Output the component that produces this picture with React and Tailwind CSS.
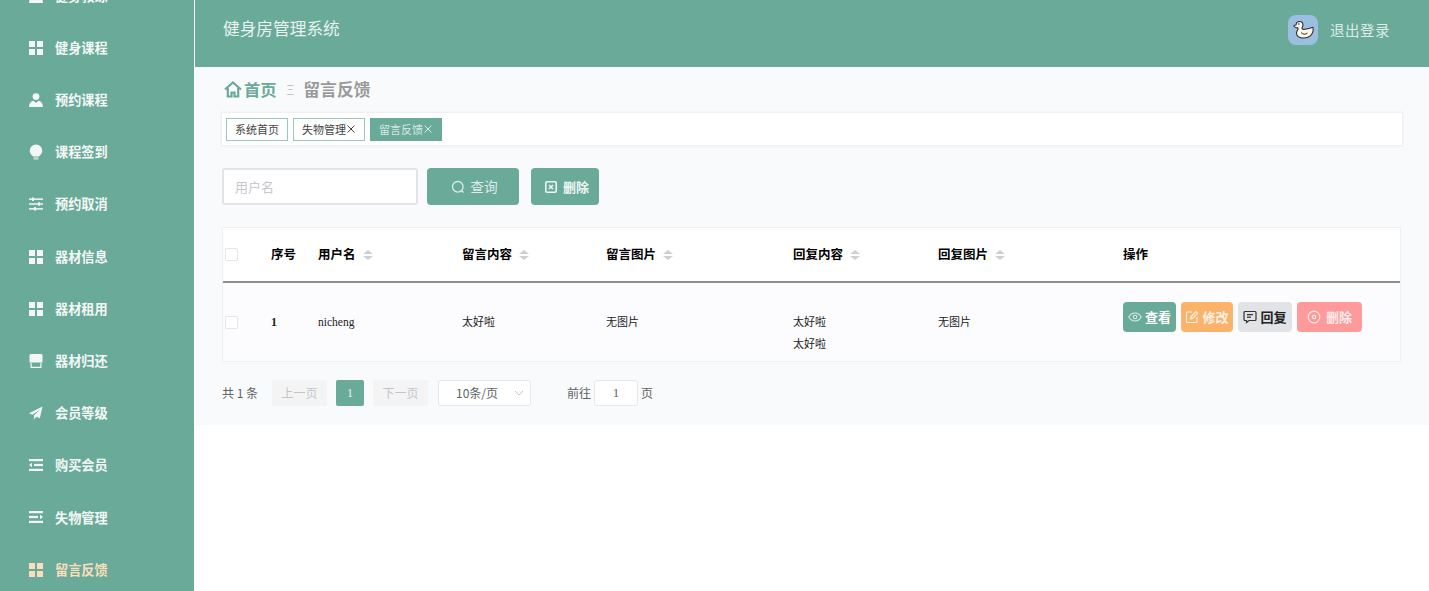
import React from "react";

const SANS = "font-['Noto_Sans_CJK_SC','Liberation_Serif',serif]";

const Grid = () => (
  <svg width="14" height="14" viewBox="0 0 14 14" fill="currentColor">
    <rect x="0" y="0" width="6" height="6" />
    <rect x="8" y="0" width="6" height="6" />
    <rect x="0" y="8" width="6" height="6" />
    <rect x="8" y="8" width="6" height="6" />
  </svg>
);
const Person = () => (
  <svg width="14" height="14" viewBox="0 0 14 14" fill="currentColor">
    <circle cx="7" cy="3.6" r="3.4" />
    <path d="M0 14c0-4 2.5-6 4.6-6.300L7 10l2.400-2.300C11.500 8 14 10 14 14z" />
  </svg>
);
const Bulb = () => (
  <svg width="14" height="16" viewBox="0 0 14 16" fill="currentColor">
    <path d="M7 .5a6.300 6.300 0 0 0-6.300 6.300c0 2.700 1.800 4.300 3.400 5.700h5.800c1.600-1.400 3.400-3 3.400-5.700A6.300 6.300 0 0 0 7 .5z" />
    <rect x="4.600" y="13.200" width="4.800" height="2.400" opacity=".65" />
  </svg>
);
const Sliders = () => (
  <svg width="14" height="14" viewBox="0 0 14 14" fill="currentColor">
    <rect x="0" y="1.400" width="14" height="1.500" />
    <rect x="0" y="6.250" width="14" height="1.500" />
    <rect x="0" y="11.100" width="14" height="1.500" />
    <rect x="3" y="0.500" width="2" height="3.400" />
    <rect x="9" y="5.300" width="2" height="3.400" />
    <rect x="5" y="10.100" width="2" height="3.400" />
  </svg>
);
const Shop = () => (
  <svg width="14" height="14" viewBox="0 0 14 14" fill="currentColor">
    <path d="M2 0h10a1.500 1.500 0 0 1 1.500 1.500V8.500H.5V1.500A1.500 1.500 0 0 1 2 0z" />
    <path d="M1.500 9h1.200v3.700h8.600V9h1.200v5H1.500z" />
  </svg>
);
const Plane = () => (
  <svg width="15" height="14" viewBox="0 0 15 14" fill="currentColor">
    <path d="M14.500 0 0 7.200l3.800 1.700L12 3 5.300 9.600V14l2.600-3 3.700 1.700z" />
  </svg>
);
const Lines = ({ left }) => (
  <svg width="14" height="12" viewBox="0 0 14 12" fill="currentColor">
    <rect x="0" y="0" width="14" height="2.200" />
    <rect x="0" y="9.800" width="14" height="2.200" />
    {left ? <rect x="5" y="4.900" width="9" height="2.200" /> : <rect x="0" y="4.900" width="9" height="2.200" />}
    {left ? <path d="M0 6l3-2.200v4.400z" /> : <path d="M14 6l-3-2.200v4.400z" />}
  </svg>
);

const Home = () => (
  <svg width="18" height="17" viewBox="0 0 18 17" fill="none" stroke="#6aaa99" strokeWidth="2.200">
    <path d="M1 8.500 9 1.500 17 8.500" />
    <path d="M3.800 7v8.500h3.700v-4h3v4h3.700V7" />
  </svg>
);

const Duck = () => (
  <svg width="24" height="20" viewBox="0 0 24 20">
    <path
      d="M3 5.500 5 5c.2-2.300 1.800-3.500 3.500-3.500 2 0 3.500 1.500 3.500 3.500 0 1.500-1 2.300-1 3.300 0 1 1.200 1.300 3 1 2.500-.4 5-1 8-2 .6 3-.6 6.500-2.700 8.500-1.600 1.500-4 2.200-6.800 2.200-3.500 0-6.500-1.500-7-4.500-.3-1.800 1-3.300 1.500-4.500.2-.5.100-1-.4-1.400-1 .3-2.500.1-3.600-1.100z"
      fill="#fbf6e6"
      stroke="#2f2f2f"
      strokeWidth="1.100"
      strokeLinejoin="round"
    />
    <circle cx="7.800" cy="4" r=".8" fill="#2f2f2f" />
    <path d="M10 12.500c1.500 2 4.500 2.200 6.500.7" fill="none" stroke="#2f2f2f" strokeWidth="1" />
  </svg>
);

const Sort = () => (
  <span className="ml-[7px] inline-flex flex-col gap-[2px]">
    <span className="h-0 w-0 border-x-[5px] border-b-[4px] border-x-transparent border-b-[#ccd0d6]" />
    <span className="h-0 w-0 border-x-[5px] border-t-[4px] border-x-transparent border-t-[#ccd0d6]" />
  </span>
);

const menu = [
  ["健身教练", <Person key="p" />],
  ["健身课程", <Grid key="g" />],
  ["预约课程", <Person key="p" />],
  ["课程签到", <Bulb key="b" />],
  ["预约取消", <Sliders key="s" />],
  ["器材信息", <Grid key="g" />],
  ["器材租用", <Grid key="g" />],
  ["器材归还", <Shop key="s" />],
  ["会员等级", <Plane key="pl" />],
  ["购买会员", <Lines key="l" left />],
  ["失物管理", <Lines key="l" />],
  ["留言反馈", <Grid key="g" />],
];

const Tag = ({ children, active, close }) => (
  <span
    className={`flex h-[23px] items-center border pl-[8px] text-[11px] ${close ? "w-[72px] pr-[8px]" : "pr-[8px]"} ${
      active ? "border-[#6aaa99] bg-[#6aaa99] text-[#d7e9e4]" : "border-[#9cc7bb] bg-white text-[#444]"
    }`}
  >
    {children}
    {close && (
      <svg className="ml-auto shrink-0" width="10" height="10" viewBox="0 0 10 10" stroke="currentColor" strokeWidth="1">
        <path d="M1.500 1.500l7 7M8.500 1.500l-7 7" />
      </svg>
    )}
  </span>
);

const cols = "grid grid-cols-[48px_47px_144px_144px_187px_145px_185px_1fr]";

const Th = ({ children, sort }) => (
  <div className="flex items-center text-[12.500px] font-bold text-black">
    {children}
    {sort && <Sort />}
  </div>
);

const ActBtn = ({ bg, text, w, icon, children }) => (
  <span
    className={`flex h-[30px] items-center justify-center gap-[3px] rounded-[4px] text-[13px] font-bold ${bg} ${text} ${w}`}
  >
    {icon}
    {children}
  </span>
);

const PageBtn = ({ children, cls }) => (
  <span className={`flex h-[26px] items-center justify-center rounded-[2px] text-[12px] ${cls}`}>{children}</span>
);

export default function App() {
  return (
    <div lang="zh-CN" className={`flex h-[591px] w-[1429px] overflow-hidden bg-white ${SANS}`}>
      <aside className="h-full w-[194px] shrink-0 overflow-hidden bg-[#6aaa99]">
        <nav className="-mt-[30.500px] flex flex-col">
          {menu.map(([label, icon], i) => (
            <div
              key={i}
              className={`flex h-[52.200px] items-center pl-[29px] text-[13.200px] font-semibold ${
                label === "留言反馈" ? "text-[#fbdfbd]" : "text-[#f3f8f6]"
              }`}
            >
              <span className="flex w-[14px] items-center justify-center">{icon}</span>
              <span className="ml-[12px]">{label}</span>
            </div>
          ))}
        </nav>
      </aside>
      <div className="ml-px flex min-w-0 flex-1 flex-col">
        <header className="flex h-[67px] shrink-0 items-center justify-between bg-[#6aaa99] pl-[28px] pr-[39px]">
          <span className="-mt-[9px] text-[16.700px] text-[#e9f3f0]">健身房管理系统</span>
          <div className="-mt-[8px] flex items-center">
            <span className="flex h-[30px] w-[30px] items-center justify-center rounded-[8px] bg-[#9abfe0]">
              <Duck />
            </span>
            <span className="ml-[12px] text-[14.500px] tracking-[0.5px] text-[#dcece8]">退出登录</span>
          </div>
        </header>
        <main className="h-[358px] bg-[#f9fafc] pl-[26px] pr-[26px]">
          <div className="flex h-[45px] items-center pl-[3px]">
            <Home />
            <span className="ml-[2px] text-[16.300px] font-semibold text-[#6aaa99]">首页</span>
            <span className="ml-[10px] text-[13px] text-[#c4c4c4]">Ξ</span>
            <span className="ml-[9px] text-[16.800px] font-semibold text-[#9a9a9a]">留言反馈</span>
          </div>
          <div className="flex h-[34px] items-center gap-[5px] border border-[#eef0f3] bg-white pl-[4px] shadow-[0_0_2px_rgba(0,0,0,0.06)]">
            <Tag>系统首页</Tag>
            <Tag close>失物管理</Tag>
            <Tag active close>留言反馈</Tag>
          </div>
          <div className="mt-[22px] flex items-center">
            <div className="ml-[1px] flex h-[37px] w-[196px] items-center rounded-[3px] border-2 border-[#e2e4e8] bg-white pl-[11px] text-[13px] text-[#c6c8cf]">
              用户名
            </div>
            <button className="ml-[9px] flex h-[37px] w-[92px] items-center justify-center gap-[5px] rounded-[4px] bg-[#6aaa99] pl-[3px] text-[13.700px] text-[#dcece8]">
              <svg width="14" height="14" viewBox="0 0 14 14" fill="none" stroke="currentColor" strokeWidth="1.300">
                <circle cx="6.800" cy="6.800" r="5.300" />
                <path d="M10.500 10.500l2 2" />
              </svg>
              查询
            </button>
            <button className="ml-[12px] flex h-[37px] w-[68px] items-center justify-center gap-[6px] rounded-[4px] bg-[#6aaa99] pl-[4px] text-[13px] font-bold text-[#eef6f4]">
              <svg width="12" height="12" viewBox="0 0 12 12" fill="none" stroke="currentColor" strokeWidth="1.600">
                <rect x=".8" y=".8" width="10.400" height="10.400" rx="1" />
                <path d="M4 4l4 4M8 4l-4 4" />
              </svg>
              删除
            </button>
          </div>
          <section className="mt-[22px] ml-[1px] w-[1179px] border border-[#eff1f4] bg-[#fcfcfe]">
            <div className={`${cols} h-[55px] items-center border-b-2 border-[#8f8f8f] bg-white`}>
              <div className="pl-[2px]">
                <span className="block h-[13px] w-[13px] rounded-[2px] border border-[#e4e6ea] bg-white" />
              </div>
              <Th>序号</Th>
              <Th sort>用户名</Th>
              <Th sort>留言内容</Th>
              <Th sort>留言图片</Th>
              <Th sort>回复内容</Th>
              <Th sort>回复图片</Th>
              <Th>操作</Th>
            </div>
            <div className={`${cols} h-[78px] items-center text-[11px] text-[#222]`}>
              <div className="pl-[2px]">
                <span className="block h-[13px] w-[13px] rounded-[2px] border border-[#e4e6ea] bg-white" />
              </div>
              <div className="font-['Liberation_Serif',serif] text-[12px] font-bold">1</div>
              <div className="pt-[2px] font-['Liberation_Serif',serif] text-[11.500px]">nicheng</div>
              <div className="pb-[2px]">太好啦</div>
              <div className="pb-[2px]">无图片</div>
              <div className="pt-[20px] leading-[22px]">
                <div>太好啦</div>
                <div>太好啦</div>
              </div>
              <div className="pb-[2px]">无图片</div>
              <div className="-mt-[10px] flex gap-[5px]">
                <ActBtn bg="bg-[#6aaa99]" text="text-white" w="w-[53px]"
                  icon={
                    <svg width="14" height="10" viewBox="0 0 14 10" fill="none" stroke="#dcece8" strokeWidth="1.100">
                      <path d="M.8 5C2.500 2 4.500 1 7 1s4.500 1 6.200 4C11.500 8 9.500 9 7 9S2.500 8 .8 5z" />
                      <circle cx="7" cy="5" r="1.800" />
                    </svg>
                  }>查看</ActBtn>
                <ActBtn bg="bg-[#fbb36c]" text="text-[#fdf1e4]" w="w-[52px]"
                  icon={
                    <svg width="14" height="14" viewBox="0 0 14 14" fill="none" stroke="#fdeedd" strokeWidth="1.200">
                      <path d="M7 2H2.500A1 1 0 0 0 1.500 3v8.500a1 1 0 0 0 1 1H11a1 1 0 0 0 1-1V7" />
                      <path d="M5.500 8.800 6 6.500 11 1.500l1.700 1.700-5 5z" />
                    </svg>
                  }>修改</ActBtn>
                <ActBtn bg="bg-[#e2e3e6]" text="text-[#222]" w="w-[54px]"
                  icon={
                    <svg width="14" height="14" viewBox="0 0 14 14" fill="none" stroke="#333" strokeWidth="1.200">
                      <path d="M2 1.500h10a1 1 0 0 1 1 1v7a1 1 0 0 1-1 1H6l-2.500 2v-2H2a1 1 0 0 1-1-1v-7a1 1 0 0 1 1-1z" />
                      <path d="M4 4.700h6M4 7.200h4" />
                    </svg>
                  }>回复</ActBtn>
                <ActBtn bg="bg-[#ff9a9a]" text="text-[#ffeaea]" w="w-[65px]"
                  icon={
                    <svg className="mr-[2px]" width="14" height="14" viewBox="0 0 14 14" fill="none" stroke="#ffeaea" strokeWidth="1.200">
                      <circle cx="7" cy="7" r="5.800" />
                      <circle cx="7" cy="7" r="1.700" />
                    </svg>
                  }>删除</ActBtn>
              </div>
            </div>
          </section>
          <div className="mt-[18px] ml-[1px] flex items-center text-[12px] text-[#606266]">
            <span className="w-[36px] whitespace-nowrap">共 1 条</span>
            <PageBtn cls="ml-[14px] w-[55px] bg-[#f4f4f5] text-[#c0c4cc]">上一页</PageBtn>
            <PageBtn cls="ml-[9px] w-[28px] bg-[#6aaa99] font-['Liberation_Serif',serif] text-[#eaf4f1]">1</PageBtn>
            <PageBtn cls="ml-[9px] w-[55px] bg-[#f4f4f5] text-[#c0c4cc]">下一页</PageBtn>
            <div className="relative ml-[10px] flex h-[26px] w-[93px] items-center rounded-[3px] border border-[#e4e7ed] bg-white pl-[17px] text-[#606266]">
              10条/页
              <svg className="absolute right-[6px] top-[9px]" width="10" height="6" viewBox="0 0 10 6" fill="none" stroke="#c0c4cc">
                <path d="M1 1l4 4 4-4" />
              </svg>
            </div>
            <span className="ml-[36px]">前往</span>
            <span className="ml-[3px] flex h-[26px] w-[44px] items-center justify-center rounded-[3px] border border-[#e4e7ed] bg-white font-['Liberation_Serif',serif] text-[13px]">1</span>
            <span className="ml-[3px]">页</span>
          </div>
        </main>
      </div>
    </div>
  );
}
